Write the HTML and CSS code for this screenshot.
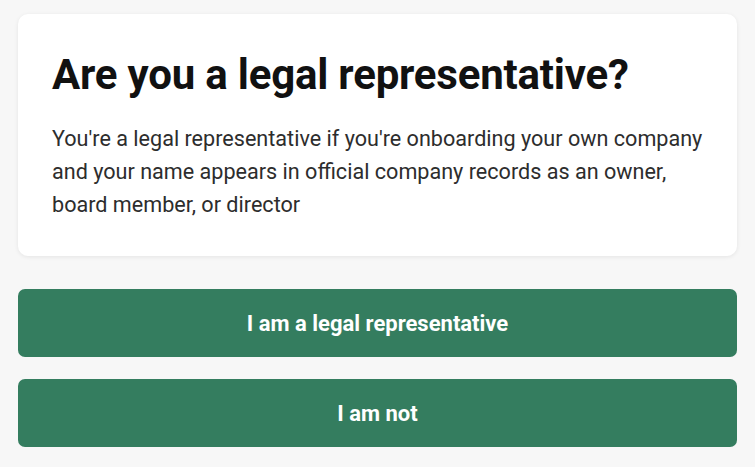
FILE: index.html
```html
<!DOCTYPE html>
<html lang="en">
<head>
  <meta charset="UTF-8">
  <title>Legal representative</title>
  <meta name="viewport" content="width=device-width, initial-scale=1.0">
  <link rel="stylesheet" href="styles.css">
</head>
<body>

  <div class="wrap">
    <div class="card">
      <h1>Are you a legal representative?</h1>
      <p>You're a legal representative if you're onboarding your own company and your name appears in official company records as an owner, board member, or director</p>
    </div>

    <div class="actions">
      <button class="choice-btn">I am a legal representative</button>
      <button class="choice-btn">I am not</button>
    </div>
  </div>

</body>
</html>
```

FILE: styles.css
```css
* { margin: 0; padding: 0; box-sizing: border-box; font-family: Roboto, "Liberation Sans", sans-serif; }
body {
  background: #f7f7f7;
}

.wrap {
  padding: 14px 18px;
  display: flex;
  flex-direction: column;
  gap: 33px;
}

/* CARD */
.card {
  background: #fff;
  border-radius: 10px;
  padding: 37px 34px 35px;
  box-shadow: 0 1px 4px rgba(0,0,0,0.08);
}
.card h1 { font-size: 42px; font-weight: 700; color: #111; line-height: 48px; margin-bottom: 23px; letter-spacing: -0.2px; }
.card p { font-size: 21.6px; color: #2d2d2d; line-height: 33px; }

.actions { display: flex; flex-direction: column; gap: 22px; }
.choice-btn {
  display: block;
  width: 100%;
  height: 68px;
  background-color: #347d5f;
  color: #fff;
  border: none;
  border-radius: 7px;
  font-size: 22px;
  font-weight: 700;
  cursor: pointer;
}
.choice-btn:hover { background-color: #2b6a50; }
```
